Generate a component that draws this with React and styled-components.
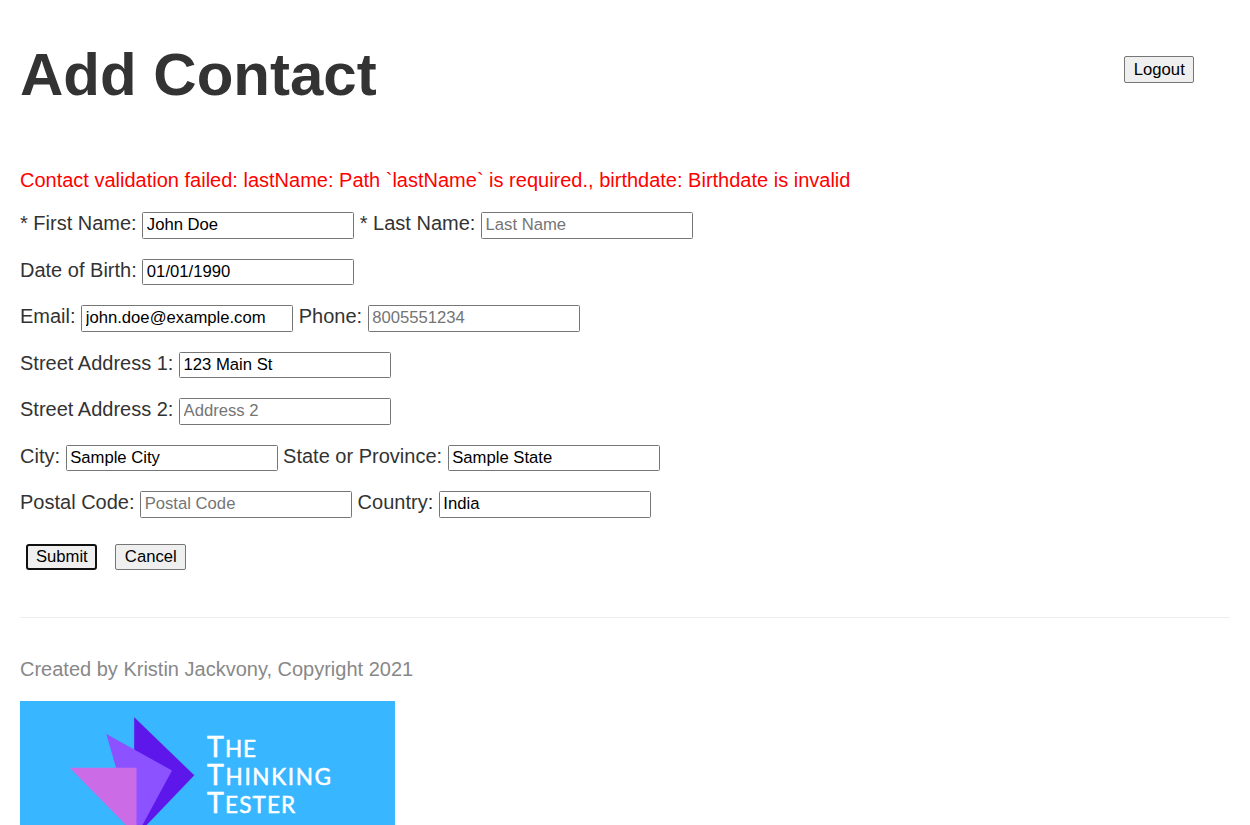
import React from 'react';
import styled, { createGlobalStyle } from 'styled-components';

const GlobalStyle = createGlobalStyle`
  html, body { overflow: hidden; height: 825px; }
  body {
    margin: 0;
    background: #fff;
    color: #333;
    font: 20px/23px "Liberation Sans", Arial, sans-serif;
  }
`;
const Page = styled.main`padding: 0 20px;`;
const Header = styled.header`
  display: flex;
  justify-content: space-between;
  padding: 40px 36px 0 0;
  height: 129px;
`;
const Title = styled.h1`
  margin: 0;
  font-size: 60px;
  line-height: 69px;
`;
const Button = styled.button`
  box-sizing: border-box;
  width: ${p => p.$width || 71}px;
  height: 26.5px;
  padding: 0 0 0 0.6px;
  border: ${p => (p.$focused ? '2px solid #101010' : '1px solid #767676')};
  border-radius: ${p => (p.$focused ? 3 : 2)}px;
  background: #efefef;
  color: #000;
  font: 16.67px/19px "Liberation Sans", Arial, sans-serif;
`;
const Logout = styled(Button)`margin-top: 16px;`;
const ErrorText = styled.p`
  margin: 0 0 20px;
  color: #f00;
`;
const Row = styled.div`
  display: flex;
  height: 46.5px;
`;
const Field = styled.label`
  display: flex;
  align-items: flex-start;
  gap: 5.56px;
  margin-right: 5.56px;
  white-space: nowrap;
`;
const Input = styled.input`
  box-sizing: border-box;
  width: 212px;
  height: 26.5px;
  margin: 0;
  padding: 1px 3.6px;
  border: 1px solid #767676;
  border-radius: 1.5px;
  color: #000;
  font: 16.67px/19px "Liberation Sans", Arial, sans-serif;
  &::placeholder { color: #757575; }
`;
const Actions = styled.div`
  display: flex;
  gap: 18px;
  padding: 6px 6px 47px;
`;
const Footer = styled.footer`
  border-top: 1px solid #eee;
  padding-top: 40px;
  color: #888;
`;
const Credit = styled.p`margin: 0 0 20px;`;
const Logo = styled.svg`display: block;`;
const Wordmark = styled.g`
  fill: #fff;
  stroke: #fff;
  stroke-width: 0.5px;
  font-family: Lato, sans-serif;
  font-size: 22.5px;
`;

const rows = [
  [['* First Name:', 'John Doe', 'First Name'], ['* Last Name:', '', 'Last Name']],
  [['Date of Birth:', '01/01/1990', 'yyyy-MM-dd']],
  [['Email:', 'john.doe@example.com', 'example@email.com'], ['Phone:', '', '8005551234']],
  [['Street Address 1:', '123 Main St', 'Address 1']],
  [['Street Address 2:', '', 'Address 2']],
  [['City:', 'Sample City', 'City'], ['State or Province:', 'Sample State', 'State or Province']],
  [['Postal Code:', '', 'Postal Code'], ['Country:', 'India', 'Country']],
];

export default function App() {
  return (
    <Page>
      <GlobalStyle />
      <Header>
        <Title>Add Contact</Title>
        <Logout $width={70}>Logout</Logout>
      </Header>
      <ErrorText>
        Contact validation failed: lastName: Path `lastName` is required., birthdate: Birthdate is invalid
      </ErrorText>
      {rows.map((fields, i) => (
        <Row key={i}>
          {fields.map(([label, value, placeholder]) => (
            <Field key={label}>
              {label}
              <Input defaultValue={value} placeholder={placeholder} />
            </Field>
          ))}
        </Row>
      ))}
      <Actions>
        <Button $focused>Submit</Button>
        <Button>Cancel</Button>
      </Actions>
      <Footer>
        <Credit>Created by Kristin Jackvony, Copyright 2021</Credit>
        <Logo width="375" height="150" viewBox="0 0 375 150">
          <rect width="375" height="150" fill="#38b6ff" />
          <path d="M114.2 16.3L174.3 74.3L114.2 137Z" fill="#5e17eb" />
          <path d="M86.3 33L152 69.5L116 136Z" fill="#8c52ff" />
          <path d="M49.7 66.7H116.5V134.7Z" fill="#cb6ce6" />
          <Wordmark>
            <text x="187.1" y="56.4" textLength="49"><tspan fontSize="28.5">T</tspan>HE</text>
            <text x="187.1" y="84.4" textLength="123.8"><tspan fontSize="28.5">T</tspan>HINKING</text>
            <text x="187.1" y="112.4" textLength="88"><tspan fontSize="28.5">T</tspan>ESTER</text>
          </Wordmark>
        </Logo>
      </Footer>
    </Page>
  );
}
